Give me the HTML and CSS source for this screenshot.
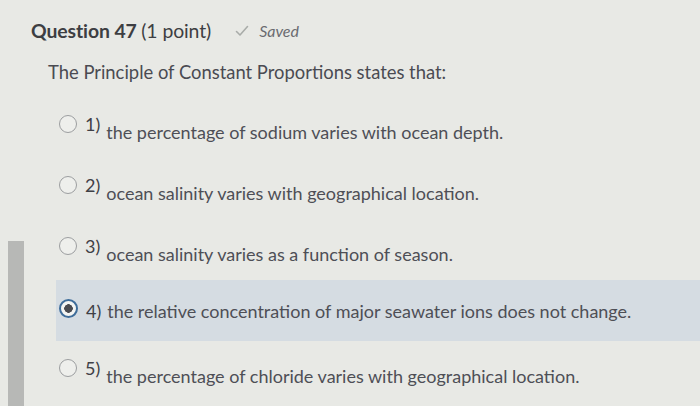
FILE: index.html
```html
<!DOCTYPE html>
<html lang="en">
<head>
<meta charset="utf-8">
<title>Question 47</title>
<link rel="stylesheet" href="styles.css">
</head>
<body>
<div class="page">
  <div class="rail"><div class="rail-bar"></div></div>
  <main class="quiz">
    <header class="q-head">
      <h1 class="q-title">Question 47 <span class="q-points">(1 point)</span></h1>
      <span class="q-status">
        <svg class="check" width="14" height="12" viewBox="0 0 14 12"><path d="M1.5 6.5 L5 10 L12.5 1.5" fill="none" stroke="#a9aca9" stroke-width="1.6" stroke-linecap="round" stroke-linejoin="round"/></svg>
        <span class="saved">Saved</span>
      </span>
    </header>
    <p class="q-text">The Principle of Constant Proportions states that:</p>
    <ul class="options">
      <li class="option"><span class="radio"></span><span class="num">1)</span><span class="ans">the percentage of sodium varies with ocean depth.</span></li>
      <li class="option"><span class="radio"></span><span class="num">2)</span><span class="ans">ocean salinity varies with geographical location.</span></li>
      <li class="option"><span class="radio"></span><span class="num">3)</span><span class="ans">ocean salinity varies as a function of season.</span></li>
      <li class="option selected"><span class="radio"></span><span class="num">4)</span><span class="ans">the relative concentration of major seawater ions does not change.</span></li>
      <li class="option"><span class="radio"></span><span class="num">5)</span><span class="ans">the percentage of chloride varies with geographical location.</span></li>
    </ul>
  </main>
</div>
</body>
</html>
```

FILE: styles.css
```css
html, body {
  margin: 0;
  padding: 0;
}
body {
  background: #e8e9e5;
  font-family: Lato, "Open Sans", Arial, sans-serif;
  color: #4e4f56;
  width: 700px;
  height: 406px;
  overflow: hidden;
}
.page {
  display: flex;
  height: 406px;
}
.rail {
  width: 31px;
  flex: none;
  display: flex;
  flex-direction: column;
  padding-top: 241px;
  box-sizing: border-box;
}
.rail-bar {
  margin-left: 8px;
  width: 16px;
  flex: 1;
  background: #b7b8b6;
}
.quiz {
  flex: 1;
  display: flex;
  flex-direction: column;
}
.q-head {
  display: flex;
  align-items: center;
  height: 30px;
  margin-top: 15px;
  gap: 24px;
}
.q-title {
  margin: 0;
  font-size: 19.4px;
  font-weight: 700;
  color: #3d3e42;
  letter-spacing: -0.1px;
}
.q-points {
  font-weight: 400;
}
.q-status {
  display: flex;
  align-items: center;
  gap: 10px;
  margin-top: 1px;
}
.saved {
  font-style: italic;
  font-size: 16px;
  color: #6a6b70;
}
.q-text {
  margin: 13px 0 0 17px;
  font-size: 18.4px;
  line-height: 28px;
  color: #4a4b52;
}
.options {
  list-style: none;
  margin: 11px 0 0 25px;
  padding: 0;
}
.option {
  display: flex;
  align-items: center;
  height: 61px;
  padding-left: 3px;
  font-size: 18px;
}
.option.selected {
  background: #d5dce2;
}
.radio {
  flex: none;
  width: 16px;
  height: 16px;
  border: 1.5px solid #9c9ea0;
  border-radius: 50%;
  background: #eeefec;
  margin-right: 8px;
  box-sizing: content-box;
  margin-top: -8px;
}
.selected .radio {
  border: 2px solid #3f6d9a;
  width: 15px;
  height: 15px;
  background: radial-gradient(circle, #4a4b50 0 4px, #f4f5f3 4.5px);
  margin-top: -4px;
}
.num {
  margin-right: 6px;
  margin-top: -8px;
  color: #3f4046;
}
.ans {
  margin-top: 8px;
}
.selected .num, .selected .ans {
  margin-top: 0;
}
```
